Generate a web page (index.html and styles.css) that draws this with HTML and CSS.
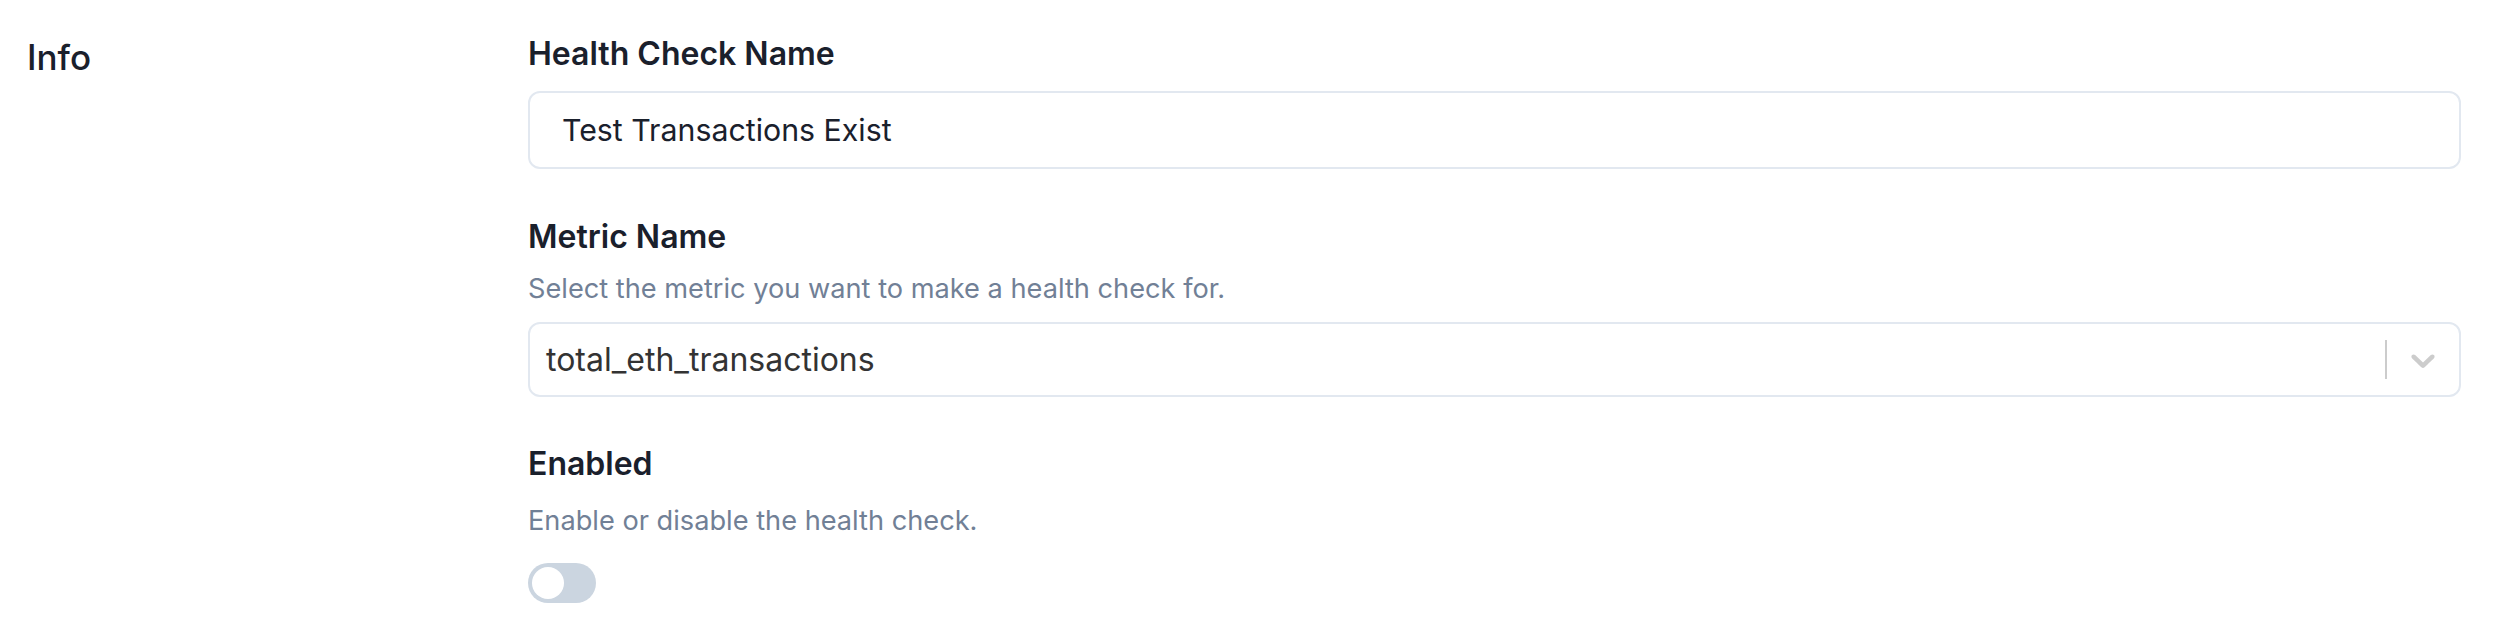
FILE: index.html
```html
<!DOCTYPE html>
<html lang="en">
<head>
<meta charset="utf-8">
<title>Health Check</title>
<link rel="stylesheet" href="styles.css">
</head>
<body>
<section class="section">
  <h2 class="section-title">Info</h2>
  <div class="fields">
    <div class="field">
      <label class="field-label">Health Check Name</label>
      <div class="text-input">Test Transactions Exist</div>
    </div>
    <div class="field field-metric">
      <label class="field-label">Metric Name</label>
      <p class="field-help help-metric">Select the metric you want to make a health check for.</p>
      <div class="select">
        <div class="select-value">total_eth_transactions</div>
        <div class="select-indicators">
          <span class="select-sep"></span>
          <span class="select-arrow">
            <svg viewBox="0 0 20 20" width="40" height="40" aria-hidden="true"><path fill="currentColor" d="M4.516 7.548c0.436-0.446 1.043-0.481 1.576 0l3.908 3.747 3.908-3.747c0.533-0.481 1.141-0.446 1.574 0 0.436 0.445 0.408 1.197 0 1.615-0.406 0.418-4.695 4.502-4.695 4.502-0.217 0.223-0.502 0.335-0.787 0.335s-0.57-0.112-0.789-0.335c0 0-4.287-4.084-4.695-4.502s-0.436-1.170 0-1.615z"/></svg>
          </span>
        </div>
      </div>
    </div>
    <div class="field field-enabled">
      <label class="field-label">Enabled</label>
      <p class="field-help help-enabled">Enable or disable the health check.</p>
      <div class="switch"><span class="switch-thumb"></span></div>
    </div>
  </div>
</section>
</body>
</html>
```
FILE: styles.css
```css
* { box-sizing: border-box; }
html, body { margin: 0; padding: 0; background: #ffffff; }
body {
  font-family: Inter, "Noto Sans", "Liberation Sans", sans-serif;
  color: #1A202C;
}
.section {
  display: flex;
  padding: 30px 43px 0 27px;
}
.section-title {
  width: 501px;
  flex: none;
  margin: 3px 0 0 0;
  font-size: 35px;
  line-height: 48px;
  font-weight: 500;
  color: #1A202C;
}
.fields {
  flex: 1;
  display: flex;
  flex-direction: column;
}
.field { display: flex; flex-direction: column; }
.field-metric { margin-top: 44px; }
.field-enabled { margin-top: 43px; }
.field-label {
  font-size: 32px;
  line-height: 48px;
  font-weight: 600;
  color: #1A202C;
}
.text-input {
  margin-top: 13px;
  height: 78px;
  border: 2px solid #E2E8F0;
  border-radius: 12px;
  padding: 0 32px;
  display: flex;
  align-items: center;
  font-size: 30.3px;
  color: #1A202C;
}
.field-help {
  margin: 0;
  font-size: 27.2px;
  line-height: 42px;
  color: #718096;
}
.help-metric { margin-top: 7px; }
.help-enabled { margin-top: 12px; }
.select {
  margin-top: 12px;
  height: 75px;
  border: 2px solid #E2E8F0;
  border-radius: 12px;
  display: flex;
  align-items: stretch;
}
.select-value {
  flex: 1;
  display: flex;
  align-items: center;
  padding: 4px 16px;
  font-size: 32px;
  color: #333333;
}
.select-indicators { display: flex; align-items: stretch; }
.select-sep {
  width: 2px;
  margin: 16px 0;
  background: #cccccc;
}
.select-arrow {
  display: flex;
  align-items: center;
  padding: 0 16px;
  color: #cccccc;
}
.select-arrow svg { display: block; }
.switch {
  margin-top: 21px;
  width: 68px;
  height: 40px;
  border-radius: 20px;
  background: #CBD5E0;
  padding: 4px;
  display: flex;
}
.switch-thumb {
  width: 32px;
  height: 32px;
  border-radius: 50%;
  background: #ffffff;
}
```
